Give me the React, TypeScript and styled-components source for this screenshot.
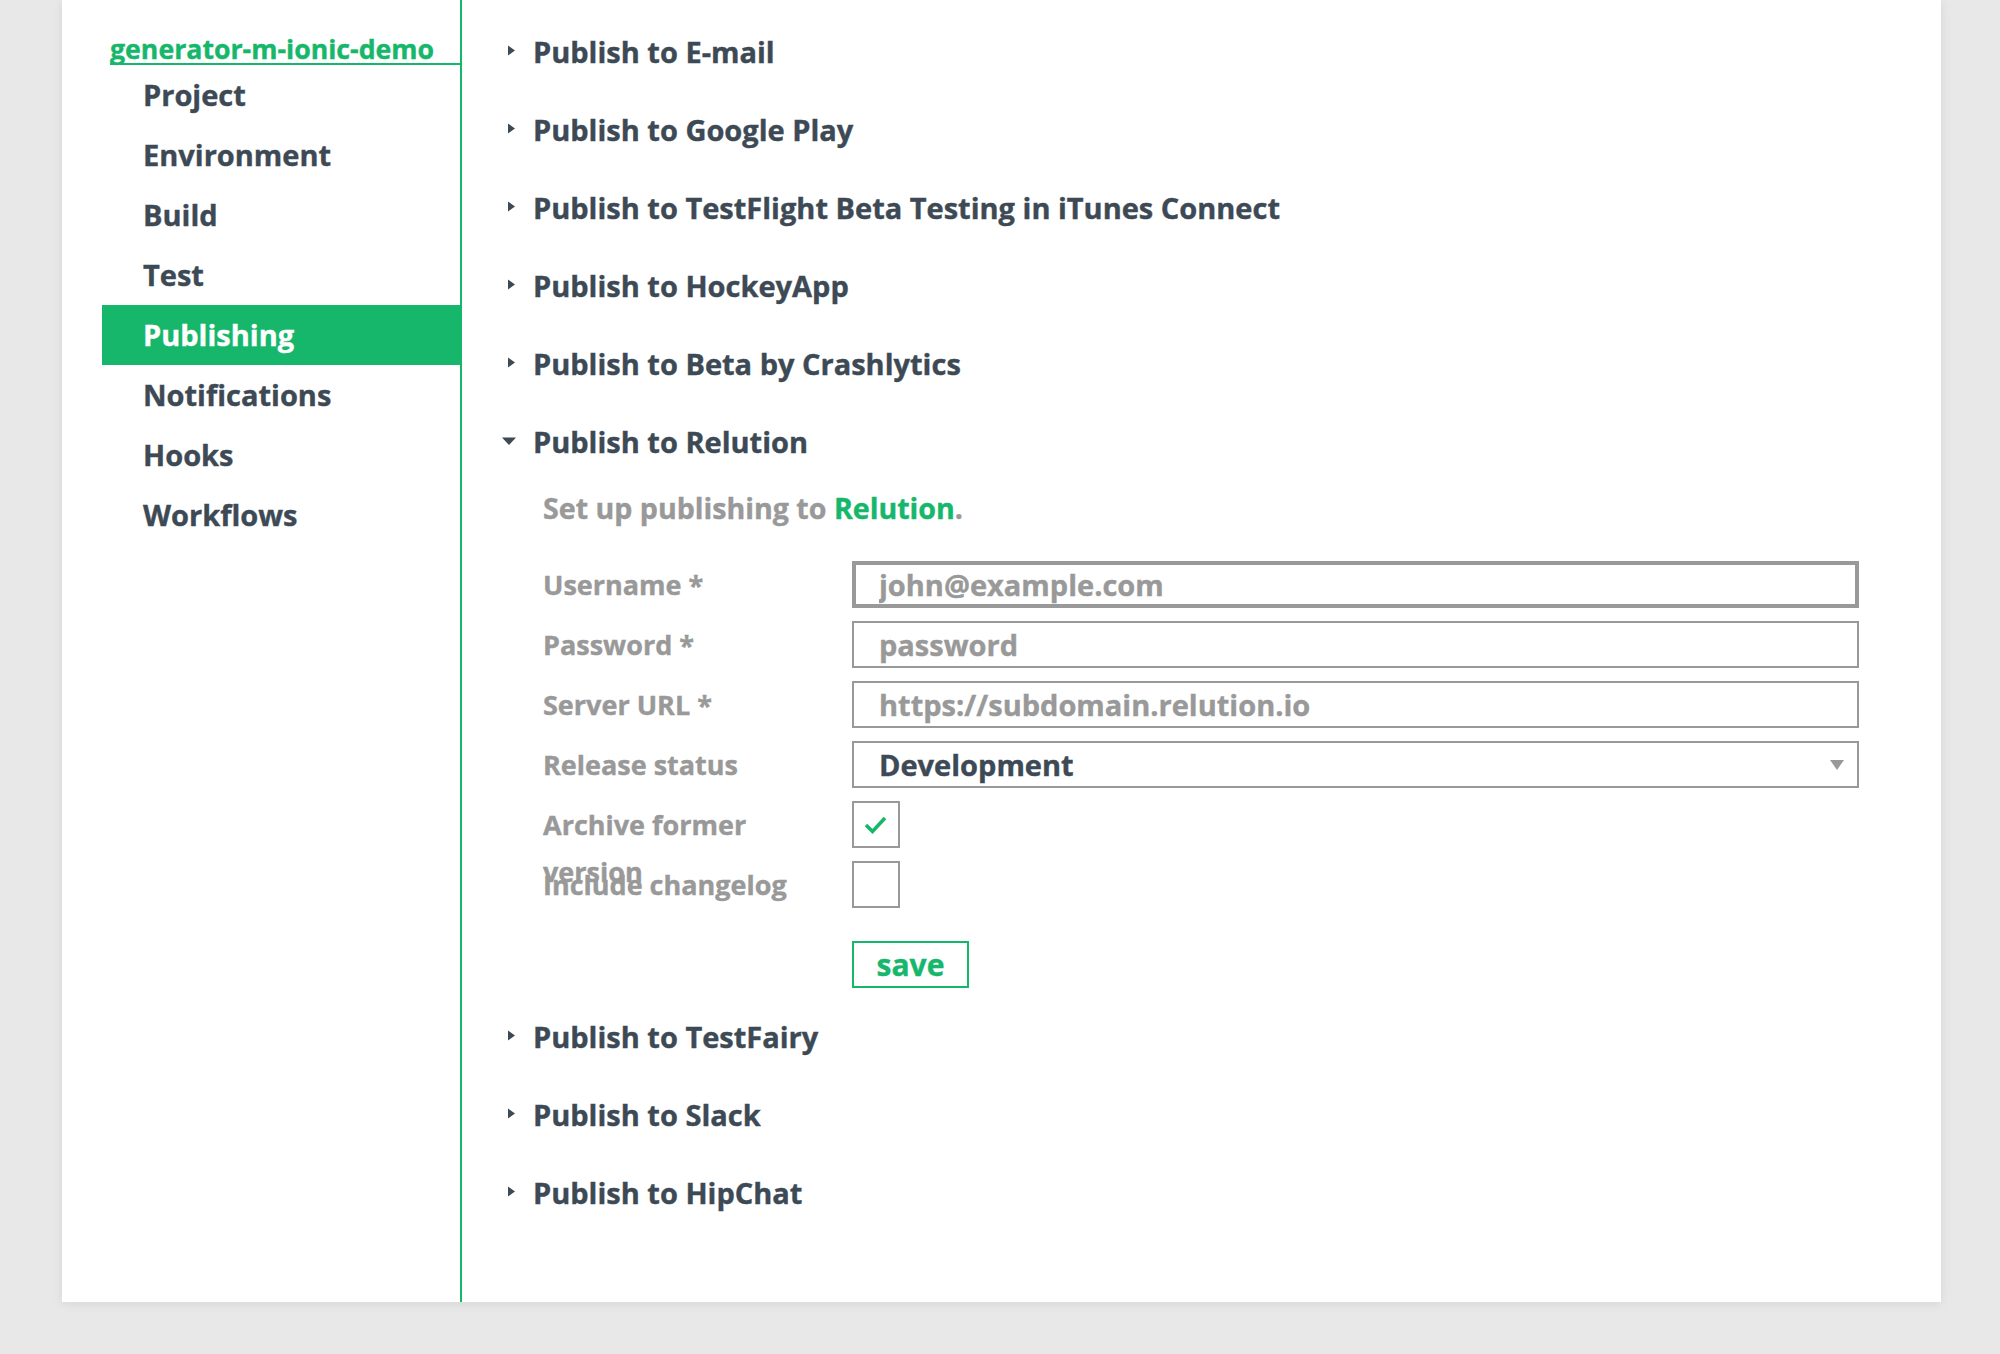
import React from 'react';
import styled, { createGlobalStyle } from 'styled-components';

const GREEN = '#16b76b';
const INK = '#3d4a55';
const MUTED = '#999999';

const GlobalStyle = createGlobalStyle`
  html, body {
    margin: 0;
    padding: 0;
    background: #e8e8e8;
  }
  body {
    font-family: 'Open Sans', 'Liberation Sans', sans-serif;
    font-weight: 700;
    color: ${INK};
    -webkit-text-stroke-width: 0.4px;
  }
  * {
    box-sizing: border-box;
  }
`;

const Page = styled.div`
  min-height: 1354px;
  padding-left: 62px;
`;

const Card = styled.div`
  display: flex;
  width: 1879px;
  background: #fff;
  box-shadow: 0 2px 10px rgba(0, 0, 0, 0.08);
`;

const Sidebar = styled.nav`
  width: 400px;
  flex-shrink: 0;
  padding-top: 35px;
  border-right: 2px solid ${GREEN};
`;

const ProjectTitle = styled.div`
  margin-left: 48px;
  font-size: 26.7px;
  line-height: 28px;
  color: ${GREEN};
  border-bottom: 2px solid ${GREEN};
`;

const NavList = styled.ul`
  list-style: none;
  margin: 0 0 0 40px;
  padding: 0;
`;

const NavItem = styled.li<{ $active?: boolean }>`
  height: 60px;
  line-height: 60px;
  padding-left: 41px;
  font-size: 29px;
  color: ${(p) => (p.$active ? '#fff' : INK)};
  background: ${(p) => (p.$active ? GREEN : 'transparent')};
`;

const Main = styled.main`
  flex: 1;
  padding: 12px 82px 71px 38px;
`;

const SectionHeader = styled.div`
  display: flex;
  align-items: center;
  gap: 17px;
  height: 78px;
  font-size: 29px;
  color: ${INK};
`;

const ArrowIcon = styled.svg`
  width: 16px;
  height: 16px;
  flex-shrink: 0;
  fill: ${INK};
`;

const SectionBody = styled.div`
  margin: 8px 0 9px 43px;
`;

const Description = styled.p`
  margin: 0 0 33px;
  font-size: 28.6px;
  line-height: 40px;
  color: ${MUTED};
`;

const Highlight = styled.span`
  color: ${GREEN};
`;

const FormGrid = styled.div`
  display: grid;
  grid-template-columns: 309px 1fr;
  grid-auto-rows: 47px;
  row-gap: 13px;
`;

const Label = styled.label`
  padding: 0 30px 0 0;
  font-size: 27px;
  line-height: 47px;
  color: ${MUTED};
`;

const TextInput = styled.input<{ $focused?: boolean }>`
  width: 100%;
  height: 47px;
  margin: 0;
  padding: 0 25px;
  border: 2px solid ${MUTED};
  border-radius: 0;
  box-shadow: ${(p) => (p.$focused ? `inset 0 0 0 2px ${MUTED}` : 'none')};
  outline: none;
  font-family: inherit;
  font-weight: 700;
  font-size: 29px;
  color: ${INK};
  background: #fff;

  &::placeholder {
    color: ${MUTED};
    opacity: 1;
  }
`;

const SelectBox = styled.div`
  display: flex;
  align-items: center;
  justify-content: space-between;
  height: 47px;
  padding: 0 13px 0 25px;
  border: 2px solid ${MUTED};
  font-size: 29px;
  color: ${INK};
`;

const SelectCaret = styled.svg`
  width: 14px;
  height: 10px;
  fill: ${MUTED};
`;

const Checkbox = styled.div`
  display: flex;
  align-items: center;
  justify-content: center;
  width: 48px;
  height: 47px;
  border: 2px solid ${MUTED};
`;

const Actions = styled.div`
  margin-top: 33px;
  padding-left: 309px;
`;

const SaveButton = styled.button`
  width: 117px;
  height: 47px;
  padding: 0;
  border: 2px solid ${GREEN};
  border-radius: 0;
  background: #fff;
  font-family: inherit;
  font-weight: 700;
  font-size: 30px;
  line-height: 1;
  color: ${GREEN};
`;

const navItems = ['Project', 'Environment', 'Build', 'Test', 'Publishing', 'Notifications', 'Hooks', 'Workflows'];

const before = [
  'Publish to E-mail',
  'Publish to Google Play',
  'Publish to TestFlight Beta Testing in iTunes Connect',
  'Publish to HockeyApp',
  'Publish to Beta by Crashlytics',
];

const after = ['Publish to TestFairy', 'Publish to Slack', 'Publish to HipChat'];

const Arrow = ({ open }: { open?: boolean }) => (
  <ArrowIcon viewBox="0 0 16 16">
    {open ? <polygon points="2,4.5 16,4.5 9,12" /> : <polygon points="8,2.5 15,7.5 8,12.5" />}
  </ArrowIcon>
);

const Section = ({ title, open, children }: { title: string; open?: boolean; children?: React.ReactNode }) => (
  <section>
    <SectionHeader>
      <Arrow open={open} />
      {title}
    </SectionHeader>
    {open && <SectionBody>{children}</SectionBody>}
  </section>
);

const CheckMark = () => (
  <svg width="24" height="20" viewBox="0 0 24 20">
    <polyline points="2,10 8.5,16.5 21,3" fill="none" stroke={GREEN} strokeWidth="3.6" />
  </svg>
);

const RelutionForm = () => (
  <>
    <Description>
      Set up publishing to <Highlight>Relution</Highlight>.
    </Description>
    <FormGrid>
      <Label>Username *</Label>
      <TextInput $focused placeholder="john@example.com" readOnly />
      <Label>Password *</Label>
      <TextInput placeholder="password" readOnly />
      <Label>Server URL *</Label>
      <TextInput placeholder="https://subdomain.relution.io" readOnly />
      <Label>Release status</Label>
      <SelectBox>
        Development
        <SelectCaret viewBox="0 0 14 10">
          <polygon points="0,0 14,0 7,10" />
        </SelectCaret>
      </SelectBox>
      <Label>Archive former version</Label>
      <div>
        <Checkbox>
          <CheckMark />
        </Checkbox>
      </div>
      <Label>Include changelog</Label>
      <div>
        <Checkbox />
      </div>
    </FormGrid>
    <Actions>
      <SaveButton>save</SaveButton>
    </Actions>
  </>
);

export default function App() {
  return (
    <Page>
      <GlobalStyle />
      <Card>
        <Sidebar>
          <ProjectTitle>generator-m-ionic-demo</ProjectTitle>
          <NavList>
            {navItems.map((item) => (
              <NavItem key={item} $active={item === 'Publishing'}>
                {item}
              </NavItem>
            ))}
          </NavList>
        </Sidebar>
        <Main>
          {before.map((t) => (
            <Section key={t} title={t} />
          ))}
          <Section title="Publish to Relution" open>
            <RelutionForm />
          </Section>
          {after.map((t) => (
            <Section key={t} title={t} />
          ))}
        </Main>
      </Card>
    </Page>
  );
}
